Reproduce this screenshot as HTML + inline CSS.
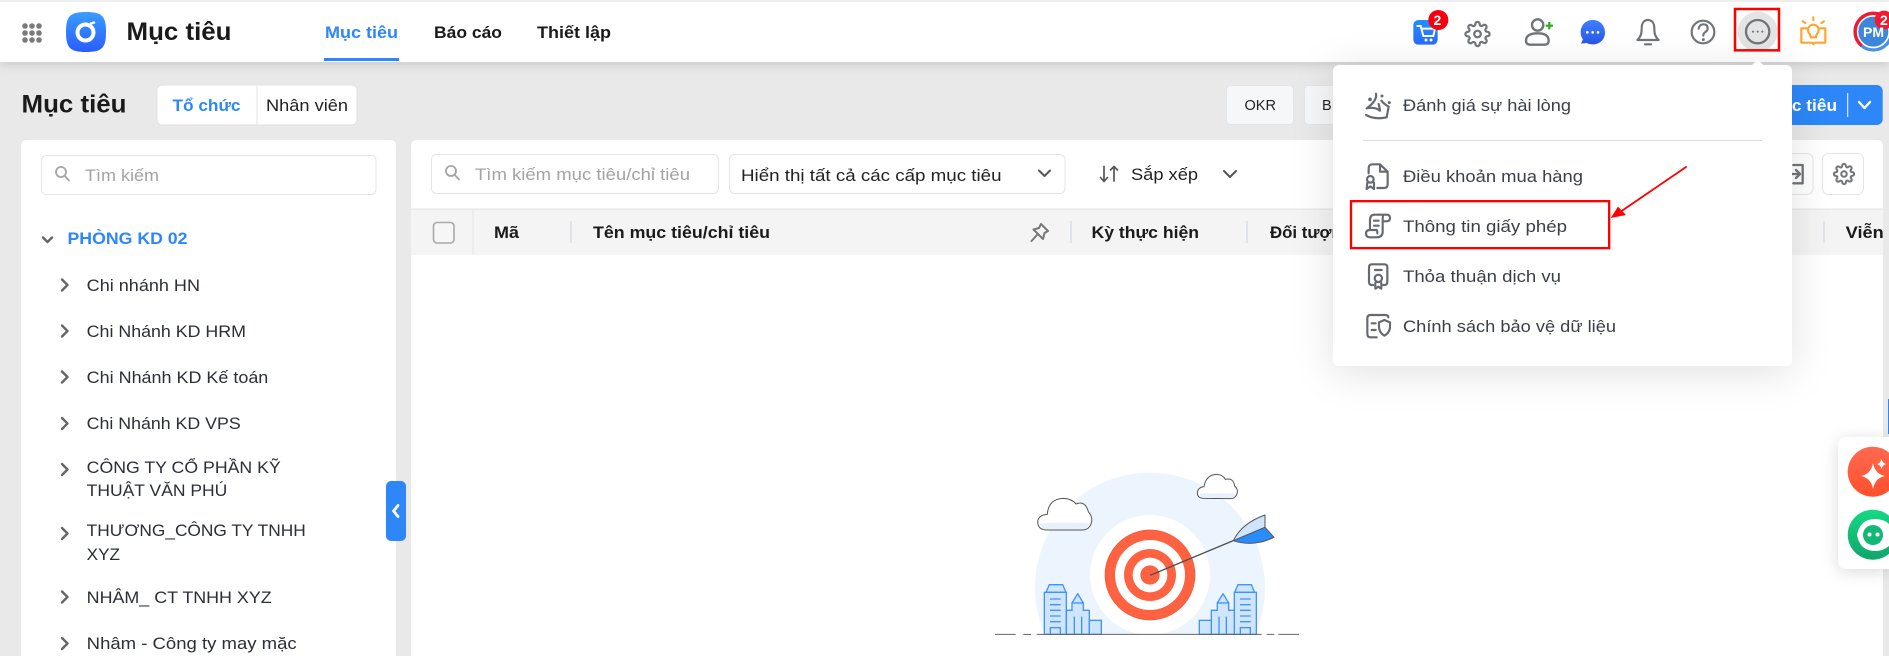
<!DOCTYPE html>
<html lang="vi">
<head>
<meta charset="utf-8">
<title>Mục tiêu</title>
<style>
html,body{margin:0;padding:0;width:1889px;height:656px;overflow:hidden;background:#e9e9e9}
svg{display:block;position:absolute;left:0;top:0;overflow:hidden}
text{font-family:"Liberation Sans","Noto Sans CJK SC",sans-serif;font-size:16.8px;fill:#222}
.b{font-weight:700;fill:#1a1a1a}
.blue{font-weight:700;fill:#2d87f9}
.ph{fill:#a3a3a3}
.tree{fill:#2b2f36}
.menu{fill:#3b4048}
.ic{fill:none;stroke:#717579;stroke-linecap:round;stroke-linejoin:round}
.box{fill:#fff;stroke:#e3e5e8;stroke-width:1}
.chev{fill:none;stroke:#666;stroke-width:2.4;stroke-linecap:round;stroke-linejoin:round}
.div{fill:#dfe3e8}
</style>
</head>
<body>
<svg width="1889" height="656" viewBox="0 0 1889 656" xmlns="http://www.w3.org/2000/svg">
<defs>
  <linearGradient id="gLogo" x1="0" y1="0" x2="0" y2="1"><stop offset="0" stop-color="#3a9dff"/><stop offset="1" stop-color="#2a5cff"/></linearGradient>
  <linearGradient id="gCart" x1="0" y1="0" x2="0" y2="1"><stop offset="0" stop-color="#1f90fb"/><stop offset="1" stop-color="#2a6cff"/></linearGradient>
  <linearGradient id="gChat" x1="0" y1="0" x2="0" y2="1"><stop offset="0" stop-color="#3e80ff"/><stop offset="1" stop-color="#2a55e8"/></linearGradient>
  <linearGradient id="gRed" x1="0" y1="0" x2="0" y2="1"><stop offset="0" stop-color="#ff6a50"/><stop offset="1" stop-color="#ff4f2c"/></linearGradient>
  <linearGradient id="gGreen" x1="0" y1="0" x2="0" y2="1"><stop offset="0" stop-color="#14d983"/><stop offset="1" stop-color="#10a56c"/></linearGradient>
  <path id="gear" d="M12 15a3 3 0 1 0 0-6 3 3 0 0 0 0 6zM19.4 15a1.65 1.65 0 0 0 .33 1.82l.06.06a2 2 0 0 1 0 2.83 2 2 0 0 1-2.83 0l-.06-.06a1.65 1.65 0 0 0-1.82-.33 1.65 1.65 0 0 0-1 1.51V21a2 2 0 0 1-2 2 2 2 0 0 1-2-2v-.09A1.65 1.65 0 0 0 9 19.4a1.65 1.65 0 0 0-1.82.33l-.06.06a2 2 0 0 1-2.83 0 2 2 0 0 1 0-2.83l.06-.06a1.65 1.65 0 0 0 .33-1.82 1.65 1.65 0 0 0-1.51-1H3a2 2 0 0 1-2-2 2 2 0 0 1 2-2h.09A1.65 1.65 0 0 0 4.6 9a1.65 1.65 0 0 0-.33-1.82l-.06-.06a2 2 0 0 1 0-2.83 2 2 0 0 1 2.83 0l.06.06a1.65 1.65 0 0 0 1.82.33H9a1.65 1.65 0 0 0 1-1.51V3a2 2 0 0 1 2-2 2 2 0 0 1 2 2v.09a1.65 1.65 0 0 0 1 1.51 1.65 1.65 0 0 0 1.82-.33l.06-.06a2 2 0 0 1 2.83 0 2 2 0 0 1 0 2.83l-.06.06a1.65 1.65 0 0 0-.33 1.82V9a1.65 1.65 0 0 0 1.51 1H21a2 2 0 0 1 2 2 2 2 0 0 1-2 2h-.09a1.65 1.65 0 0 0-1.51 1z"/>
  <path id="mag" d="M0 0a5 5 0 1 0 .01 0zM3.800 9l4.200 4.500"/>
  <clipPath id="panelClip"><rect x="411" y="140" width="1472" height="516"/></clipPath>
  <g id="bld">
    <path d="M228 427L238 404H278L288 427Z" fill="#cfe5fd" stroke="#3f94fb" stroke-width="4" stroke-linejoin="round"/>
    <rect x="223" y="427" width="66" height="126" fill="#cfe5fd" stroke="#3f94fb" stroke-width="4"/>
    <path d="M240 447H272M240 464H272M240 481H272M240 498H272M240 515H272" stroke="#3f94fb" stroke-width="4" fill="none"/>
    <rect x="241" y="533" width="30" height="20" fill="#cfe5fd" stroke="#3f94fb" stroke-width="4"/>
    <path d="M306 459L323 431L340 459Z" fill="#cfe5fd" stroke="#3f94fb" stroke-width="4" stroke-linejoin="round"/>
    <path d="M289 481H306V459H340V481H358V553H289Z" fill="#cfe5fd" stroke="#3f94fb" stroke-width="4"/>
    <path d="M313 500V553M335 500V553" stroke="#3f94fb" stroke-width="4" fill="none"/>
    <rect x="358" y="511" width="36" height="42" fill="#cfe5fd" stroke="#3f94fb" stroke-width="4"/>
  </g>
</defs>

<rect width="1889" height="656" fill="#e9e9e9"/>

<!-- page head -->
<text x="21.5" y="112.500" class="b" style="font-size:25px" textLength="105" lengthAdjust="spacingAndGlyphs">Mục tiêu</text>
<rect x="157" y="85" width="200" height="40" rx="5" fill="#fff" stroke="#e1e1e1"/>
<rect x="256.500" y="86" width="1" height="39" fill="#e0e0e0"/>
<text x="172.500" y="111" class="blue" textLength="68" lengthAdjust="spacingAndGlyphs">Tổ chức</text>
<text x="266" y="111" textLength="82" lengthAdjust="spacingAndGlyphs">Nhân viên</text>

<rect x="1226.500" y="85.500" width="67" height="39" rx="4" fill="#f6f7f9" stroke="#e3e5e8"/>
<text x="1244.500" y="110" style="font-size:14.500px" textLength="31.500" lengthAdjust="spacingAndGlyphs">OKR</text>
<rect x="1304.500" y="85.500" width="90" height="39" rx="4" fill="#f6f7f9" stroke="#e3e5e8"/>
<text x="1322" y="110" style="font-size:14.500px">B</text>
<rect x="1700" y="85" width="182.700" height="40" rx="6" fill="#2d87f9"/>
<text x="1766" y="111" class="b" style="fill:#fff" textLength="71" lengthAdjust="spacingAndGlyphs">mục tiêu</text>
<rect x="1847.200" y="93" width="1" height="24" fill="#fff"/>
<path d="M1859 102L1864.500 108L1870 102" fill="none" stroke="#fff" stroke-width="2.400" stroke-linecap="round" stroke-linejoin="round"/>

<!-- left panel -->
<path d="M21 656V146Q21 140 27 140H390Q396 140 396 146V656Z" fill="#fff"/>
<rect x="41.500" y="155.500" width="334.500" height="39" rx="5" class="box"/>
<use href="#mag" transform="translate(61,167)" class="ic" style="stroke:#a5a5a5;stroke-width:1.800"/>
<text x="85" y="181" class="ph" textLength="74" lengthAdjust="spacingAndGlyphs">Tìm kiếm</text>
<path d="M43 237.500L47.500 242L52 237.500" class="chev"/>
<text x="67.500" y="244" class="blue" textLength="120" lengthAdjust="spacingAndGlyphs">PHÒNG KD 02</text>

<path d="M62 279.500L67.500 285L62 290.500" class="chev"/>
<text x="86.700" y="291" class="tree" textLength="113.300" lengthAdjust="spacingAndGlyphs">Chi nhánh HN</text>
<path d="M62 325.500L67.500 331L62 336.500" class="chev"/>
<text x="86.700" y="337" class="tree" textLength="159.300" lengthAdjust="spacingAndGlyphs">Chi Nhánh KD HRM</text>
<path d="M62 371.500L67.500 377L62 382.500" class="chev"/>
<text x="86.700" y="383" class="tree" textLength="181.600" lengthAdjust="spacingAndGlyphs">Chi Nhánh KD Kế toán</text>
<path d="M62 418L67.500 423.500L62 429" class="chev"/>
<text x="86.700" y="429" class="tree" textLength="154" lengthAdjust="spacingAndGlyphs">Chi Nhánh KD VPS</text>
<path d="M62 464L67.500 469.500L62 475" class="chev"/>
<text x="86.700" y="473" class="tree" textLength="194" lengthAdjust="spacingAndGlyphs">CÔNG TY CỔ PHẦN KỸ</text>
<text x="86.700" y="496" class="tree" textLength="140.600" lengthAdjust="spacingAndGlyphs">THUẬT VĂN PHÚ</text>
<path d="M62 528L67.500 533.500L62 539" class="chev"/>
<text x="86.700" y="536" class="tree" textLength="219" lengthAdjust="spacingAndGlyphs">THƯƠNG_CÔNG TY TNHH</text>
<text x="86.700" y="560" class="tree" textLength="33.300" lengthAdjust="spacingAndGlyphs">XYZ</text>
<path d="M62 591.500L67.500 597L62 602.500" class="chev"/>
<text x="86.700" y="603" class="tree" textLength="185" lengthAdjust="spacingAndGlyphs">NHÂM_ CT TNHH XYZ</text>
<path d="M62 638L67.500 643.500L62 649" class="chev"/>
<text x="86.700" y="649" class="tree" textLength="210" lengthAdjust="spacingAndGlyphs">Nhâm - Công ty may mặc</text>

<!-- right panel -->
<path d="M411 656V146Q411 140 417 140H1877Q1883 140 1883 146V656Z" fill="#fff"/>
<rect x="431.500" y="154.500" width="287" height="39" rx="5" class="box"/>
<use href="#mag" transform="translate(451,166)" class="ic" style="stroke:#a5a5a5;stroke-width:1.800"/>
<text x="475" y="180" class="ph" textLength="215" lengthAdjust="spacingAndGlyphs">Tìm kiếm mục tiêu/chỉ tiêu</text>
<rect x="729.500" y="154.500" width="335.500" height="39" rx="5" class="box"/>
<text x="741" y="181" textLength="260.500" lengthAdjust="spacingAndGlyphs">Hiển thị tất cả các cấp mục tiêu</text>
<path d="M1039 170.500L1044.500 176L1050 170.500" class="chev" style="stroke:#555;stroke-width:2"/>
<path d="M1104 166.500V181M1100.500 177.500L1104 181.500L1107.500 177.500M1114 181V166.500M1110.500 170L1114 166.500L1117.500 170" fill="none" stroke="#555" stroke-width="1.700" stroke-linecap="round" stroke-linejoin="round"/>
<text x="1131" y="180" textLength="67" lengthAdjust="spacingAndGlyphs">Sắp xếp</text>
<path d="M1224 171L1230 177L1236 171" class="chev" style="stroke:#555;stroke-width:2"/>

<rect x="1770" y="153.500" width="43" height="41" rx="6" class="box"/>
<g transform="translate(1380,0) scale(.33333)" class="ic" style="stroke-width:7">
  <path d="M1240 495H1268V550H1240M1235 522H1258M1248 510L1260 522L1248 534"/>
</g>
<rect x="1822.500" y="153.500" width="41" height="41" rx="6" class="box"/>
<use href="#gear" transform="translate(1844,174) scale(.92) translate(-12,-12)" class="ic" style="stroke-width:2.200"/>

<rect x="411" y="209" width="1472" height="46" fill="#f4f4f4"/>
<rect x="411" y="208.500" width="1472" height="1.200" fill="#e6e6e6"/>
<rect x="472.500" y="209" width="1.200" height="46" fill="#e6e8ea"/>
<rect x="433.500" y="222.500" width="20.500" height="20.500" rx="3.500" fill="#f6f6f6" stroke="#a9a9a9" stroke-width="1.600"/>
<rect x="570" y="221" width="2" height="22" class="div"/>
<rect x="1070" y="221" width="2" height="22" class="div"/>
<rect x="1246" y="221" width="2" height="22" class="div"/>
<rect x="1823" y="221" width="2" height="22" class="div"/>
<g clip-path="url(#panelClip)">
<text x="494" y="238" class="b" textLength="25" lengthAdjust="spacingAndGlyphs">Mã</text>
<text x="593" y="238" class="b" textLength="177" lengthAdjust="spacingAndGlyphs">Tên mục tiêu/chỉ tiêu</text>
<text x="1091.500" y="238" class="b" textLength="107.500" lengthAdjust="spacingAndGlyphs">Kỳ thực hiện</text>
<text x="1270" y="238" class="b" textLength="82" lengthAdjust="spacingAndGlyphs">Đối tượng</text>
<text x="1845.700" y="238" class="b" textLength="38" lengthAdjust="spacingAndGlyphs">Viễn</text>
</g>
<path d="M1041 224L1048 231L1044.500 233L1043 239L1033.500 229.500L1039 228ZM1037 235L1031.500 241" fill="none" stroke="#777" stroke-width="2" stroke-linejoin="round" stroke-linecap="round"/>

<!-- illustration -->
<g transform="translate(970,450) scale(.33333)">
  <path d="M224.700 553A345 345 0 1 1 855.300 553Z" fill="#ecf4fe"/>
  <path d="M513.200 553A180 180 0 1 1 566.800 553Z" fill="#fff"/>
  <circle cx="540" cy="375" r="135" fill="#ff6240" stroke="#e65a3c" stroke-width="2"/>
  <circle cx="540" cy="375" r="105" fill="#fff"/>
  <circle cx="540" cy="375" r="78" fill="#ff6240"/>
  <circle cx="540" cy="375" r="52" fill="#fff"/>
  <circle cx="540" cy="375" r="29" fill="#ff6240"/>
  <path d="M540 376L790 272" stroke="#4f4f4f" stroke-width="4" fill="none"/>
  <path d="M790 272Q815 220 885 195V232Z" fill="#cfe5fd" stroke="#555" stroke-width="3" stroke-linejoin="round"/>
  <path d="M790 272L885 232L912 262Q850 292 790 272Z" fill="#2a8bfa" stroke="#555" stroke-width="3" stroke-linejoin="round"/>
  <path d="M232 240Q203 240 203 215Q205 195 232 193Q235 148 278 145Q305 145 318 162Q345 150 355 185Q368 200 365 215Q360 240 335 240Z" fill="#fff" stroke="#555" stroke-width="3"/>
  <path d="M208 220Q282 216 360 220Q352 238 335 238H232Q214 238 208 220Z" fill="#e6f1fc"/>
  <path d="M702 145Q682 145 682 128Q684 112 702 110Q708 75 738 73Q758 73 766 88Q790 82 794 108Q804 118 802 128Q798 146 780 146Z" fill="#fff" stroke="#555" stroke-width="3"/>
  <path d="M688 130H798Q794 144 780 144H702Q692 144 688 130Z" fill="#e6f1fc"/>
  <use href="#bld"/>
  <use href="#bld" transform="translate(1082,0) scale(-1,1)"/>
  <path d="M75 553H137M160 553H183M200 553H875M890 553H913M925 553H987" stroke="#666" stroke-width="3" fill="none"/>
</g>

<!-- collapse tab -->
<rect x="386" y="481" width="20" height="60" rx="5" fill="#2d87f9"/>
<path d="M398 505.500L393.500 511L398 516.500" fill="none" stroke="#fff" stroke-width="2.800" stroke-linecap="round" stroke-linejoin="round"/>

<!-- edge + floating widget -->
<rect x="1883" y="140" width="6" height="516" fill="#e9e9e9"/>
<rect x="1888" y="399" width="1" height="35" fill="#2d87f9"/>
<path d="M1889 437H1847Q1838 437 1838 446V560Q1838 569 1847 569H1889Z" fill="#fff" style="filter:drop-shadow(0 3px 8px rgba(0,0,0,.14))"/>
<path d="M1889 452.700A25 25 0 1 0 1889 490.700Z" fill="url(#gRed)"/>
<path d="M1873 463Q1875 474 1885 476Q1875 478 1873 489Q1871 478 1861 476Q1871 474 1873 463Z" fill="#fff"/>
<path d="M1881.500 459Q1882.500 463 1886 464Q1882.500 465 1881.500 469Q1880.500 465 1877 464Q1880.500 463 1881.500 459Z" fill="#fff"/>
<path d="M1889 515.700A25 25 0 1 0 1889 553.700Z" fill="url(#gGreen)"/>
<path d="M1857 535Q1860 519 1875 519Q1884 519 1889 524V546Q1883 551 1875 551Q1860 551 1857 535Z" fill="#fff"/>
<circle cx="1873" cy="535" r="10" fill="#12b876"/>
<circle cx="1869.500" cy="534.500" r="2" fill="#fff"/>
<circle cx="1877.500" cy="534.500" r="2" fill="#fff"/>

<!-- header -->
<g style="filter:drop-shadow(0 3px 5px rgba(0,0,0,.13))">
  <rect x="0" y="0" width="1889" height="62" fill="#fff"/>
</g>
<rect x="0" y="0" width="1889" height="2" fill="#eeeeee"/>
<g fill="#7a7a7a">
  <circle cx="25" cy="26" r="2.800"/><circle cx="32" cy="26" r="2.800"/><circle cx="39" cy="26" r="2.800"/>
  <circle cx="25" cy="33" r="2.800"/><circle cx="32" cy="33" r="2.800"/><circle cx="39" cy="33" r="2.800"/>
  <circle cx="25" cy="40" r="2.800"/><circle cx="32" cy="40" r="2.800"/><circle cx="39" cy="40" r="2.800"/>
</g>
<path d="M66 32C66 16 70 12 86 12C102 12 106 16 106 32C106 48 102 52 86 52C70 52 66 48 66 32Z" fill="url(#gLogo)"/>
<circle cx="85.500" cy="32.500" r="8" fill="none" stroke="#fff" stroke-width="4"/>
<path d="M91 23.500L94 22.500" stroke="#fff" stroke-width="2.500" stroke-linecap="round"/>
<text x="126.500" y="40" class="b" style="font-size:25px" textLength="105" lengthAdjust="spacingAndGlyphs">Mục tiêu</text>
<text x="325" y="38" class="blue" textLength="73" lengthAdjust="spacingAndGlyphs">Mục tiêu</text>
<rect x="324" y="58" width="75" height="3" fill="#2d87f9"/>
<text x="434" y="38" class="b" textLength="68" lengthAdjust="spacingAndGlyphs">Báo cáo</text>
<text x="537" y="38" class="b" textLength="74" lengthAdjust="spacingAndGlyphs">Thiết lập</text>

<!-- header icons, drawn in 3x coordinates -->
<g transform="translate(1380,0) scale(.33333)">
  <rect x="100" y="60" width="73" height="74" rx="15" fill="url(#gCart)"/>
  <path d="M112 78H122L130 108H160L165 86H125" fill="none" stroke="#fff" stroke-width="6" stroke-linejoin="round" stroke-linecap="round"/>
  <circle cx="138" cy="120" r="4.500" fill="#fff"/><circle cx="153" cy="120" r="4.500" fill="#fff"/>
  <circle cx="175" cy="60" r="30" fill="#f5000c"/>
  <g class="ic" style="stroke-width:7">
    <circle cx="473" cy="75" r="17"/>
    <path d="M438 122Q438 100 473 100Q506 100 506 122Q506 134 494 134H450Q438 134 438 122Z"/>
  </g>
  <path d="M497 77H519M508 66V88" stroke="#2aa81a" stroke-width="6.500" fill="none"/>
  <path d="M638 60C660 60 675 76 675 97C675 118 660 133 638 133C630 133 624 131 620 129L603 131L609 118C604 112 602 105 602 97C602 76 617 60 638 60Z" fill="url(#gChat)"/>
  <circle cx="622" cy="97" r="4" fill="#fff"/><circle cx="638" cy="97" r="4" fill="#fff"/><circle cx="654" cy="97" r="4" fill="#fff"/>
  <g class="ic" style="stroke-width:6.500">
    <path d="M772 120C785 108 785 95 785 85C785 68 793 60 804 60C815 60 823 68 823 85C823 95 823 108 836 120Z"/>
    <path d="M795 133H813"/>
    <circle cx="969" cy="96" r="34"/>
    <path d="M956 86Q958 73 970 73Q983 73 983 85Q983 92 976 96Q970 100 970 107"/>
  </g>
  <circle cx="970" cy="119" r="4.500" fill="#717579"/>
  <circle cx="1133" cy="95" r="60" fill="#e4e4e4"/>
  <circle cx="1133" cy="95" r="35" class="ic" style="stroke-width:7"/>
  <circle cx="1119" cy="95" r="3.200" fill="#717579"/><circle cx="1133" cy="95" r="3.200" fill="#717579"/><circle cx="1147" cy="95" r="3.200" fill="#717579"/>
  <rect x="1065" y="27" width="132" height="124" fill="none" stroke="#ff0000" stroke-width="7.500"/>
  <g fill="none" stroke="#ffa52e" stroke-width="6.500" stroke-linecap="round" stroke-linejoin="round">
    <path d="M1282 85H1264V128H1292Q1300 128 1300 133Q1300 128 1308 128H1336V85H1318"/>
    <path d="M1292 112Q1292 105 1288 101Q1284 96 1284 90A16 16 0 0 1 1316 90Q1316 96 1312 101Q1308 105 1308 112Z"/>
    <path d="M1300 52V60M1268 64L1276 69M1332 64L1324 69"/>
  </g>
  <circle cx="1480" cy="95" r="55" fill="none" stroke="#4a90e2" stroke-width="10"/>
  <path d="M1445 137A55 55 0 0 1 1480 40A55 55 0 0 1 1522 60" fill="none" stroke="#ee1c2e" stroke-width="10"/>
  <circle cx="1480" cy="95" r="47" fill="#3e86dc" stroke="#fff" stroke-width="4"/>
  <circle cx="1512" cy="60" r="28" fill="#ee1c2e"/>
</g>
<text x="1433.500" y="25" class="b" style="fill:#fff;font-size:14px">2</text>
<text x="1863" y="37" class="b" style="fill:#fff;font-size:14px" textLength="21" lengthAdjust="spacingAndGlyphs">PM</text>
<use href="#gear" transform="translate(1477.500,34) scale(1.100) translate(-12,-12)" class="ic" style="stroke-width:2"/>
<text x="1880" y="25" class="b" style="fill:#fff;font-size:14px">2</text>

<!-- dropdown -->
<g style="filter:drop-shadow(0 6px 20px rgba(0,0,0,.12))">
  <path d="M1752 65L1757.700 59.500L1763.400 65Z" fill="#fff"/>
  <rect x="1333" y="65" width="459" height="301" rx="6" fill="#fff"/>
</g>
<rect x="1363" y="140" width="399" height="1" fill="#dcdcdc"/>
<text x="1403" y="111" class="menu" textLength="168" lengthAdjust="spacingAndGlyphs">Đánh giá sự hài lòng</text>
<text x="1403" y="182" class="menu" textLength="180" lengthAdjust="spacingAndGlyphs">Điều khoản mua hàng</text>
<text x="1403" y="232" class="menu" textLength="164" lengthAdjust="spacingAndGlyphs">Thông tin giấy phép</text>
<text x="1403" y="282" class="menu" textLength="158" lengthAdjust="spacingAndGlyphs">Thỏa thuận dịch vụ</text>
<text x="1403" y="332" class="menu" textLength="213" lengthAdjust="spacingAndGlyphs">Chính sách bảo vệ dữ liệu</text>

<g transform="translate(1320,60) scale(.33333)">
  <g fill="#666a70"><circle cx="150" cy="118" r="5.500"/><circle cx="186" cy="108" r="4.500"/><circle cx="208" cy="128" r="4.500"/></g>
  <g class="ic" style="stroke-width:6.500;stroke:#666a70">
    <!-- hand -->
    <path d="M168 101Q172 122 140 145Q165 140 180 152M138 165Q165 180 200 172L206 140Q192 132 184 122M180 150L176 132"/>
    <!-- doc -->
    <path d="M146 340V325Q146 313 158 313H180L203 335V372Q203 384 192 384H172M180 313V335H203"/>
    <circle cx="151" cy="358" r="10"/>
    <path d="M142 368L140 387L151 379L162 387V368"/>
    <!-- scroll -->
    <path d="M150 510V480Q150 464 164 464H200Q210 464 210 474Q210 484 198 484H188V515Q188 532 170 532H150Q138 532 138 520Q138 510 150 510H170Q172 512 172 520M190 464Q188 466 188 484"/>
    <path d="M162 482H176M162 497H176"/>
    <!-- certificate -->
    <path d="M160 675H155Q147 675 147 665V622Q147 613 156 613H193Q202 613 202 622V665Q202 675 194 675H190"/>
    <path d="M165 630H185"/>
    <circle cx="175" cy="655" r="11"/>
    <path d="M166 668V686L175 680L184 686V668"/>
    <!-- shield doc -->
    <path d="M170 832H152Q142 832 142 822V775Q142 765 152 765H195Q205 765 205 772"/>
    <path d="M155 790H167M155 810H167"/>
    <path d="M177 787L193 780L210 787V800Q210 818 193 827Q177 818 177 800Z" fill="#fff"/>
  </g>
  <rect x="93" y="423.500" width="774.500" height="141" fill="none" stroke="#ff0000" stroke-width="7"/>
  <path d="M1098 321L902 455" stroke="#ff0000" stroke-width="5.500" fill="none" stroke-linecap="round"/>
  <path d="M872 474L894 440L918 465Z" fill="#ff0000"/>
</g>
</svg>
</body>
</html>
